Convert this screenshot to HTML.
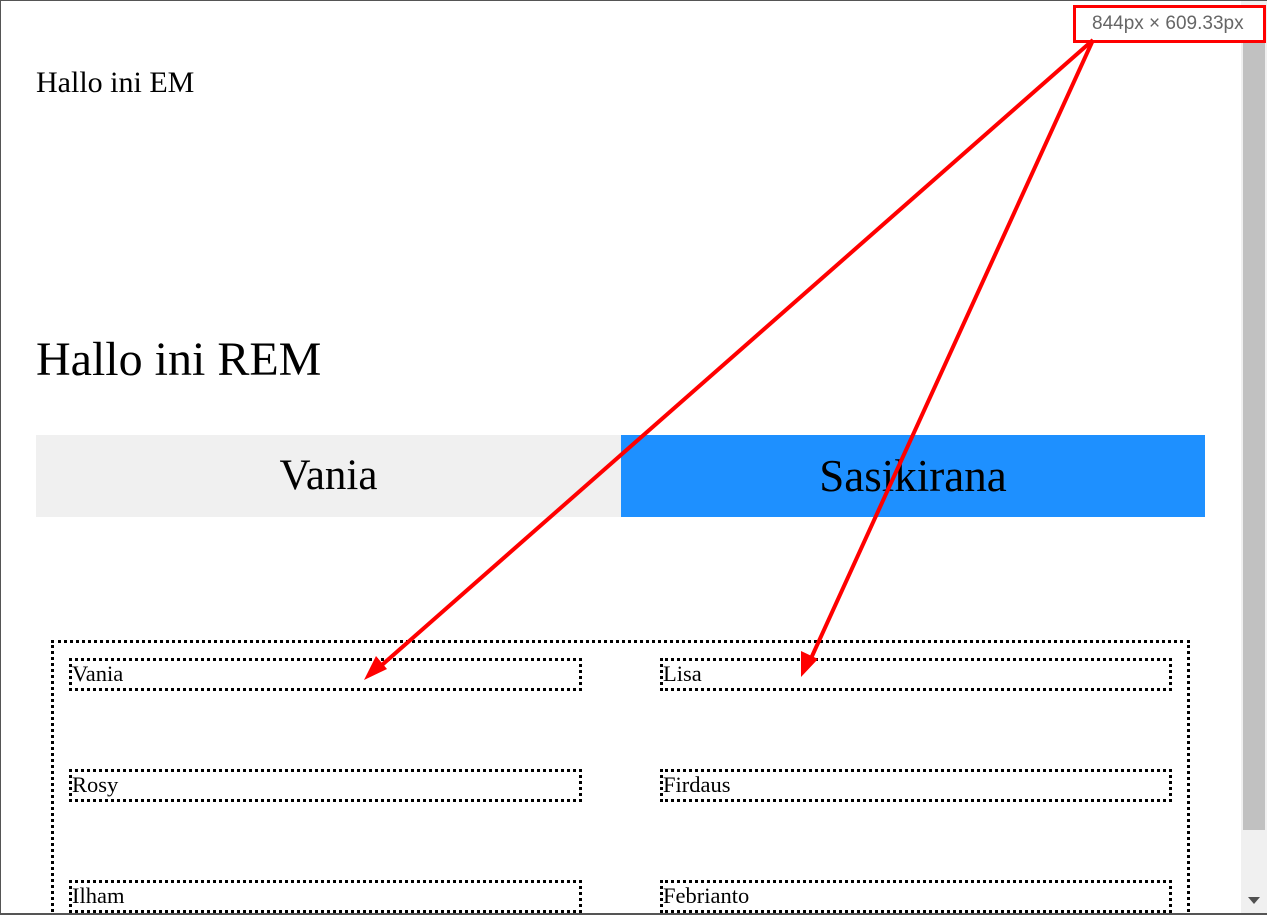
<!DOCTYPE html>
<html style="overflow:hidden;width:1267px;height:915px"><head><style>
body{margin:0;width:1267px;height:915px;overflow:hidden;background:#fff;font-family:"Liberation Serif",serif;position:relative}
.a{position:absolute}
.box{position:absolute;border:3px dotted #000;box-sizing:border-box;font-size:22.5px;line-height:26px;padding-left:0}
</style></head><body>
<div class="a" style="left:0;top:0;width:1267px;height:1px;background:#555"></div>
<div class="a" style="left:0;top:0;width:1px;height:915px;background:#555"></div>
<div class="a" style="left:36px;top:66px;font-size:30px">Hallo ini EM</div>
<div class="a" style="left:36px;top:332px;font-size:48px">Hallo ini REM</div>
<div class="a" style="left:36px;top:435px;width:585px;height:82px;background:#f0f0f0;font-size:43px;text-align:center;line-height:82px">Vania</div>
<div class="a" style="left:621px;top:435px;width:584px;height:82px;background:#1e90ff;font-size:45px;text-align:center;line-height:82px">Sasikirana</div>
<div class="box" style="left:51px;top:640px;width:1139px;height:290px"></div>
<div class="box" style="left:69px;top:658px;width:513px;height:33px">Vania</div>
<div class="box" style="left:660px;top:658px;width:512px;height:33px">Lisa</div>
<div class="box" style="left:69px;top:769px;width:513px;height:33px">Rosy</div>
<div class="box" style="left:660px;top:769px;width:512px;height:33px">Firdaus</div>
<div class="box" style="left:69px;top:880px;width:513px;height:33px">Ilham</div>
<div class="box" style="left:660px;top:880px;width:512px;height:33px">Febrianto</div>
<div class="a" style="left:1241px;top:1px;width:26px;height:912px;background:#f0f0f0"></div>
<div class="a" style="left:1243px;top:40px;width:22px;height:790px;background:#c1c1c1"></div>
<div class="a" style="left:1248px;top:897px;width:0;height:0;border-left:6px solid transparent;border-right:6px solid transparent;border-top:7px solid #505050"></div>
<div class="a" style="left:0;top:913px;width:1267px;height:2px;background:#555"></div>
<div class="a" style="left:1073px;top:5px;width:193px;height:38px;border:3px solid #f00;box-sizing:border-box;background:#fff;font-family:'Liberation Sans',sans-serif;font-size:19px;color:#666;line-height:32px;padding-left:16px">844px × 609.33px</div>
<svg class="a" style="left:0;top:0" width="1267" height="915">
<g stroke="#f00" stroke-width="4" fill="none"><line x1="1093" y1="40" x2="374" y2="672"/><line x1="1093" y1="40" x2="808" y2="665"/></g>
<polygon points="364,680 376,656 387,669" fill="#f00"/>
<polygon points="801,677 801,651 818,659" fill="#f00"/>
</svg>
</body></html>
